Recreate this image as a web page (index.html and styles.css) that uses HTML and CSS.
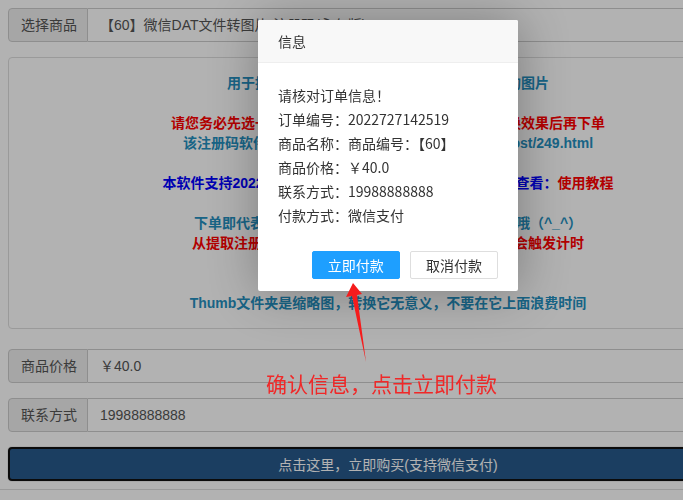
FILE: index.html
```html
<!DOCTYPE html>
<html lang="zh-CN">
<head>
    <meta charset="UTF-8">
    <meta name="viewport" content="width=device-width, initial-scale=1.0">
    <title>订单确认</title>
    <link rel="stylesheet" href="styles.css">
</head>
<body>

<div class="page">
    <div class="input-group">
        <span class="input-label">选择商品</span>
        <div class="input-value">【60】微信DAT文件转图片-注册码(永久版)</div>
    </div>

    <div class="info-panel">
        <p class="teal">用于提取并转换微信电脑版聊天记录中被加密的图片</p>
        <p><span class="red">请您务必先选一张图片免费试用提取，确认可以看到转换效果后再下单</span><br>
            <span class="teal">该注册码软件下载地址：http://www.wxdatxz.com/post/249.html</span></p>
        <p class="blue">本软件支持2022年最新版电脑微信，详细使用方法请点击查看：<span class="red">使用教程</span></p>
        <p class="gap-big"><span class="teal">下单即代表您已阅读并同意本店的售后规则，请知悉哦（^_^）</span><br>
            <span class="red">从提取注册码那刻开始计算有效期，首次打开使用才会触发计时</span></p>
        <p class="teal">Thumb文件夹是缩略图，转换它无意义，不要在它上面浪费时间</p>
    </div>

    <div class="input-group gap-top">
        <span class="input-label">商品价格</span>
        <div class="input-value">￥40.0</div>
    </div>

    <div class="input-group">
        <span class="input-label">联系方式</span>
        <div class="input-value">19988888888</div>
    </div>

    <button class="buy-btn">点击这里，立即购买(支持微信支付)</button>
</div>
<div class="footer-line"></div>

<div class="shade"></div>

<div class="layer">
    <div class="layer-title">信息</div>
    <div class="layer-content">
        请核对订单信息！<br>
        订单编号：2022727142519<br>
        商品名称：商品编号：【60】<br>
        商品价格：￥40.0<br>
        联系方式：19988888888<br>
        付款方式：微信支付
    </div>
    <div class="layer-btns">
        <a class="layer-btn btn-ok">立即付款</a>
        <a class="layer-btn">取消付款</a>
    </div>
</div>

<svg class="arrow" width="683" height="500" viewBox="0 0 683 500">
    <polygon points="353,283 362,294 357,295 366,362 352,296 346,297" fill="#f51c1c"/>
</svg>
<div class="tip-text">确认信息，点击立即付款</div>

</body>
</html>
```

FILE: styles.css
```css
html, body {
    overflow: hidden;
}
body {
    margin: 0;
    padding: 0;
    background-color: #fff;
    font-family: "Liberation Sans", "Noto Sans CJK SC", sans-serif;
    font-size: 14px;
    color: #555;
}
.page {
    width: 760px;
    padding: 8px 8px 8px 8px;
}
.input-group {
    display: flex;
    height: 34px;
    margin-bottom: 15px;
}
.input-group.gap-top {
    margin-top: 20px;
}
.input-label {
    flex: none;
    width: 80px;
    box-sizing: border-box;
    padding: 6px 0 6px 12px;
    line-height: 20px;
    white-space: nowrap;
    background-color: #eee;
    border: 1px solid #ccc;
    border-radius: 4px 0 0 4px;
    color: #555;
}
.input-value {
    flex: 1;
    padding: 6px 12px;
    line-height: 20px;
    white-space: nowrap;
    overflow: hidden;
    border: 1px solid #ccc;
    border-left: none;
    border-radius: 0 4px 4px 0;
    background-color: #fff;
}
.info-panel {
    border: 1px solid #ddd;
    border-radius: 4px;
    padding: 15px;
    text-align: center;
    font-weight: bold;
    line-height: 20px;
    font-size: 14px;
}
.info-panel p {
    margin: 0 0 20px 0;
}
.info-panel p:last-child {
    margin-bottom: 0;
}
.info-panel p.gap-big {
    margin-bottom: 40px;
}
.teal {
    color: #2590c0;
}
.red {
    color: #ff0000;
}
.blue {
    color: #0000ff;
}
.buy-btn {
    display: block;
    width: 100%;
    height: 34px;
    margin: 0;
    padding: 0;
    font-family: inherit;
    font-size: 14px;
    color: #fff;
    background-color: #285a8c;
    border: 2px solid #111;
    border-radius: 4px;
    box-shadow: 0 0 0 1px #eee;
}
.footer-line {
    border-top: 1px solid #ddd;
}

.shade {
    position: fixed;
    left: 0;
    top: 0;
    width: 100%;
    height: 100%;
    background-color: rgba(0, 0, 0, 0.3);
}
.layer {
    position: absolute;
    left: 258px;
    top: 20px;
    width: 260px;
    background-color: #fff;
    border-radius: 2px;
    box-shadow: 1px 1px 50px rgba(0, 0, 0, 0.3);
    font-family: "Noto Sans CJK SC", sans-serif;
    color: #333;
}
.layer-title {
    height: 42px;
    line-height: 42px;
    padding: 0 20px;
    background-color: #f8f8f8;
    border-bottom: 1px solid #eee;
    border-radius: 2px 2px 0 0;
    font-size: 14px;
}
.layer-content {
    padding: 20px 20px 19px 20px;
    line-height: 24px;
    font-size: 14px;
}
.layer-btns {
    text-align: right;
    padding: 0 15px 12px;
}
.layer-btn {
    display: inline-block;
    height: 26px;
    line-height: 26px;
    margin: 5px 5px 0;
    padding: 0 15px;
    border: 1px solid #dedede;
    border-radius: 2px;
    background-color: #fff;
    color: #333;
    font-size: 14px;
}
.layer-btn + .layer-btn {
    margin-left: 2px;
}
.btn-ok {
    border-color: #1e9fff;
    background-color: #1e9fff;
    color: #fff;
}

.arrow {
    position: absolute;
    left: 0;
    top: 0;
}
.tip-text {
    position: absolute;
    left: 266px;
    top: 370px;
    font-family: "Noto Sans CJK SC", sans-serif;
    font-size: 21px;
    line-height: 26px;
    color: #f02828;
}
```
